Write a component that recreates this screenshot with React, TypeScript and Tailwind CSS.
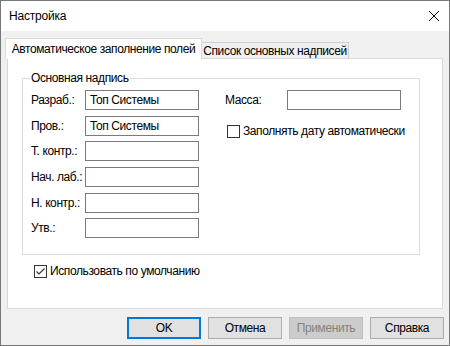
const font = { fontFamily: '"Liberation Sans", "Noto Sans", sans-serif' }

const Field = ({ value = '', wide = 114 }: { value?: string; wide?: number }) => (
  <div
    className="h-[20px] whitespace-nowrap border border-[#7a7a7a] bg-white pl-[4px] text-[12px] leading-[18px] text-black"
    style={{ width: wide }}
  >
    {value}
  </div>
)

const Row = ({ label, value, top }: { label: string; value?: string; top: string }) => (
  <div className={`flex items-center ${top}`}>
    <span className="w-[54px] whitespace-nowrap">{label}</span>
    <Field value={value} />
  </div>
)

const Check = ({ checked, label }: { checked?: boolean; label: string }) => (
  <div className="flex items-center gap-[3px]">
    <div className="flex h-[13px] w-[13px] items-center justify-center border border-[#333] bg-white">
      {checked && (
        <svg width="11" height="11" viewBox="0 0 11 11">
          <path d="M1.5 5.5 L4 8 L9.5 2.5" fill="none" stroke="#333" strokeWidth="1.2" />
        </svg>
      )}
    </div>
    <span className="whitespace-nowrap">{label}</span>
  </div>
)

const Btn = ({ children, primary, disabled }: { children: string; primary?: boolean; disabled?: boolean }) => (
  <div
    className={
      'flex h-[22px] w-[74px] items-center justify-center text-[12px] ' +
      (primary
        ? 'border-2 border-[#0078d7] bg-[#e1e1e1] text-black'
        : disabled
          ? 'border border-[#bfbfbf] bg-[#cccccc] text-[#838383]'
          : 'border border-[#adadad] bg-[#e1e1e1] text-black')
    }
  >
    {children}
  </div>
)

export default function App() {
  return (
    <div
      className="flex h-[346px] w-[450px] flex-col border border-[#777777] bg-[#f0f0f0] text-[12px] tracking-[-0.4px] text-black"
      style={font}
    >
      <div className="flex h-[30px] items-center justify-between bg-white pl-[8px] pr-[10px]">
        <span className="text-[12px] tracking-[-0.2px]">Настройка</span>
        <svg width="10" height="10" viewBox="0 0 10 10">
          <path d="M0 0 L10 10 M10 0 L0 10" stroke="#000" strokeWidth="1" />
        </svg>
      </div>

      <div className="flex flex-col px-[6px] pt-[7px]">
        <div className="-ml-[2px] flex items-end">
          <div className="relative z-10 -mb-[1px] flex h-[21px] w-[197px] items-center justify-center whitespace-nowrap border-x border-t border-[#d9d9d9] bg-white">
            Автоматическое заполнение полей
          </div>
          <div className="flex h-[16px] w-[147px] items-center justify-center whitespace-nowrap border-r border-t border-[#cfcfcf] bg-[#f0f0f0] pt-[1px]">
            Список основных надписей
          </div>
        </div>

        <div className="h-[251px] border border-[#d9d9d9] bg-white pl-[14px] pt-[19px]">
          <div className="relative h-[177px] w-[398px] border border-[#dcdcdc] pl-[8px] pt-[11px]">
            <span className="absolute -top-[9px] left-[7px] whitespace-nowrap bg-white px-[1px] leading-[16px]">
              Основная надпись
            </span>
            <div className="flex gap-[26px]">
              <div className="flex flex-col">
                <Row label="Разраб.:" value="Топ Системы" top="mt-0" />
                <Row label="Пров.:" value="Топ Системы" top="mt-[6px]" />
                <Row label="Т. контр.:" top="mt-[5px]" />
                <Row label="Нач. лаб.:" top="mt-[6px]" />
                <Row label="Н. контр.:" top="mt-[6px]" />
                <Row label="Утв.:" top="mt-[5px]" />
              </div>
              <div className="flex flex-col">
                <div className="flex items-center">
                  <span className="w-[62px]">Масса:</span>
                  <Field />
                </div>
                <div className="ml-[2px] mt-[12px]">
                  <Check label="Заполнять дату автоматически" />
                </div>
              </div>
            </div>
          </div>
          <div className="ml-[12px] mt-[7px]">
            <Check checked label="Использовать по умолчанию" />
          </div>
        </div>
      </div>

      <div className="flex justify-end gap-[7px] pr-[5px] pt-[8px]">
        <Btn primary>OK</Btn>
        <Btn>Отмена</Btn>
        <Btn disabled>Применить</Btn>
        <Btn>Справка</Btn>
      </div>
    </div>
  )
}
